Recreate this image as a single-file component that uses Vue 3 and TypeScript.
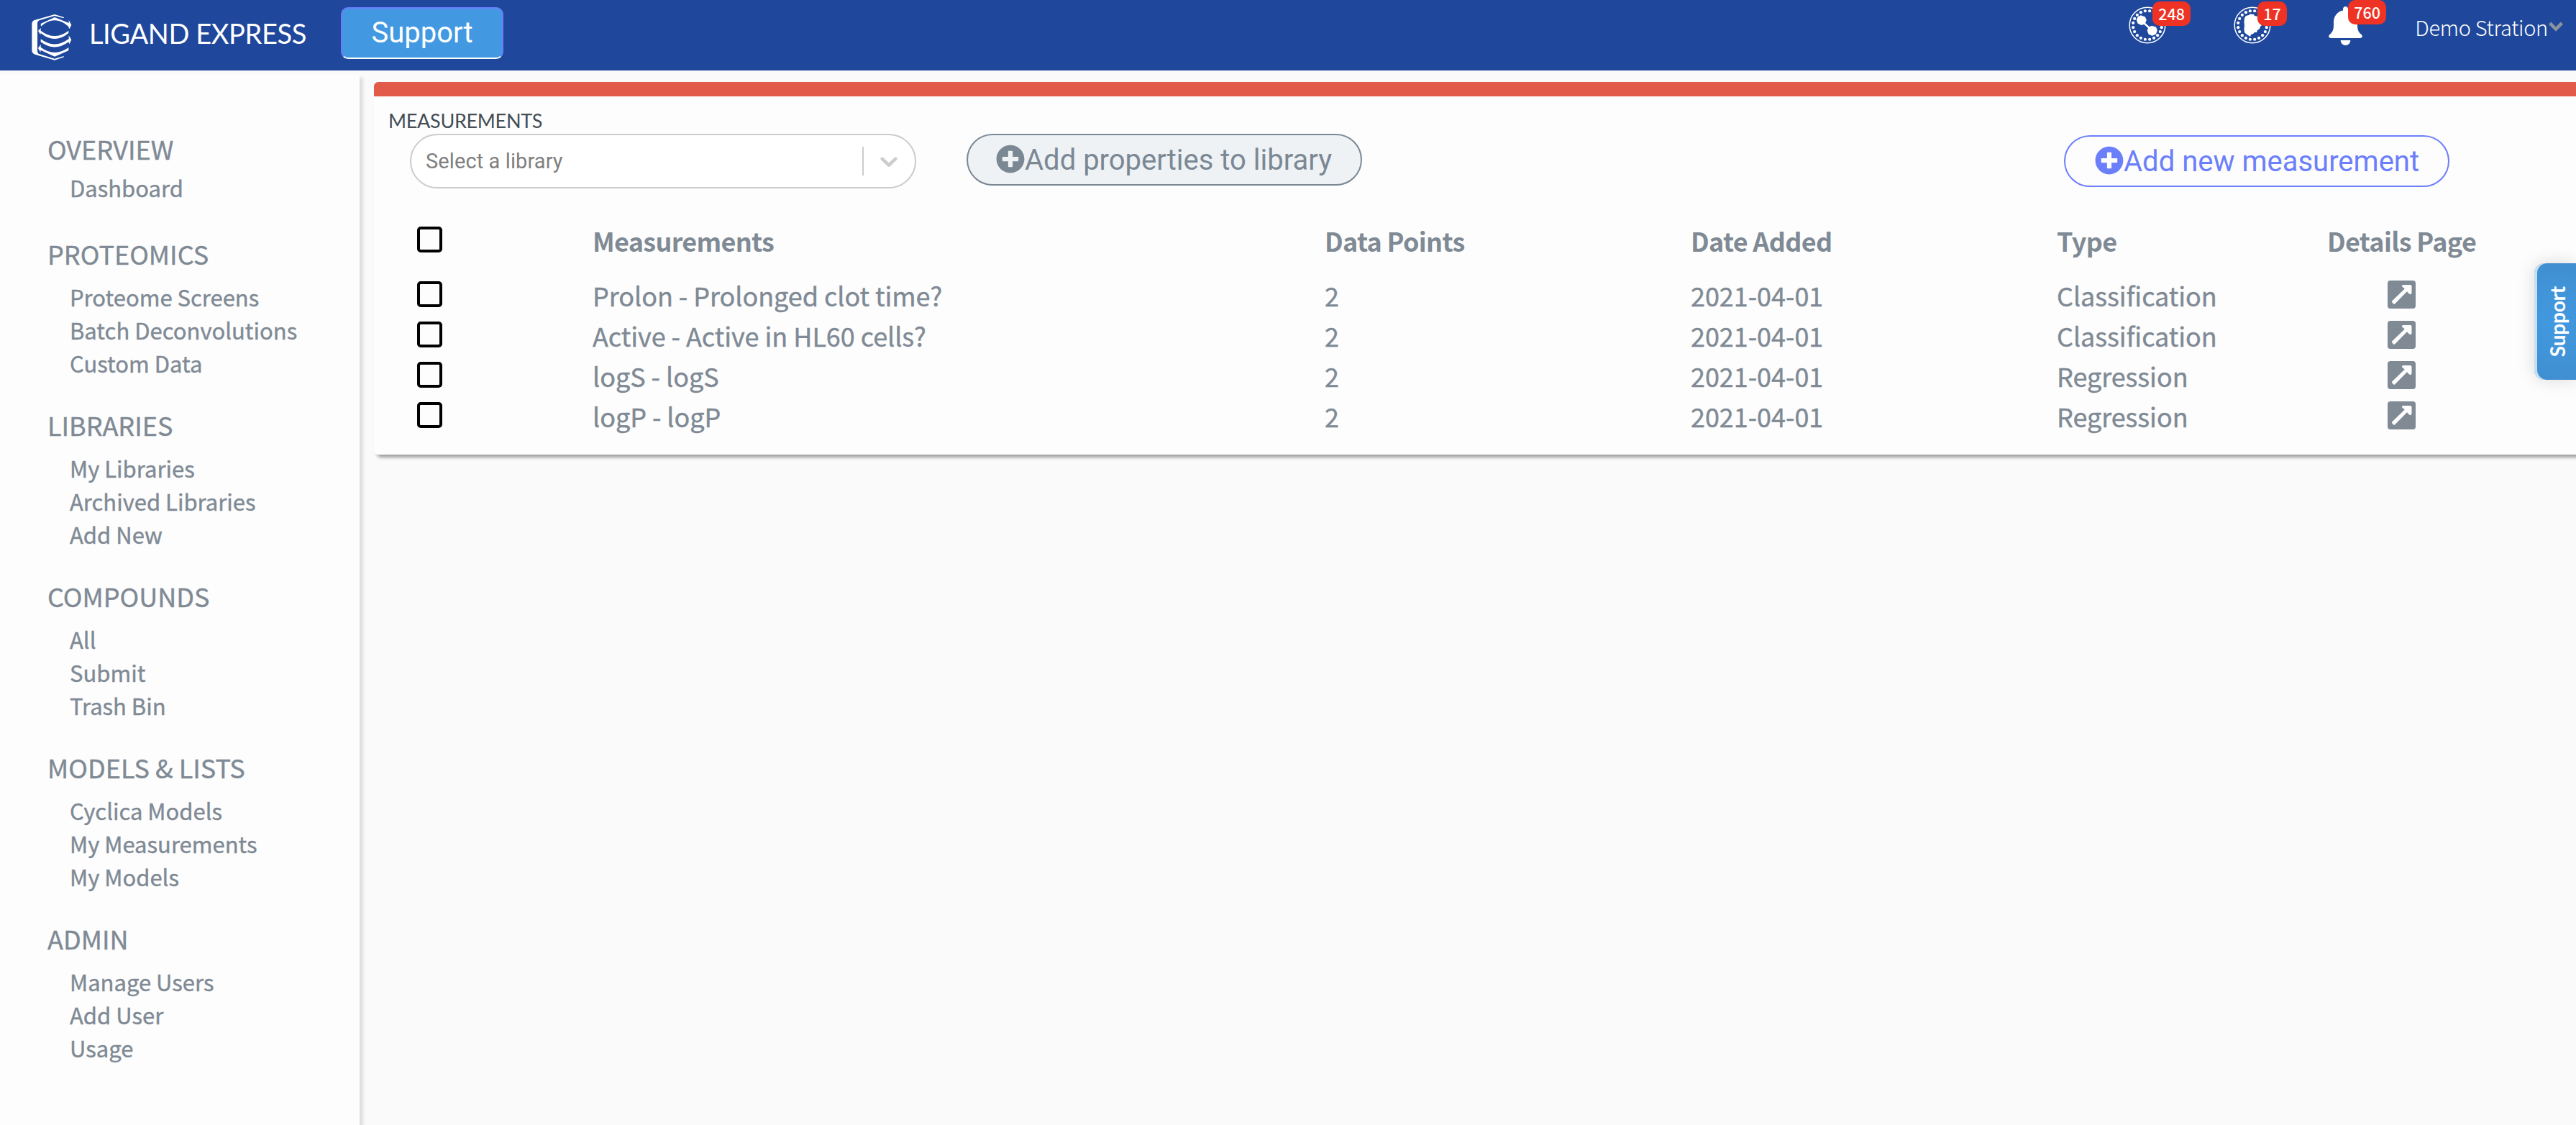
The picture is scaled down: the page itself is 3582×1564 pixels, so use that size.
<script setup lang="ts">
interface NavSection {
  title: string
  items: string[]
}

interface Measurement {
  name: string
  points: number
  added: string
  type: string
}

const sections: NavSection[] = [
  { title: 'OVERVIEW', items: ['Dashboard'] },
  { title: 'PROTEOMICS', items: ['Proteome Screens', 'Batch Deconvolutions', 'Custom Data'] },
  { title: 'LIBRARIES', items: ['My Libraries', 'Archived Libraries', 'Add New'] },
  { title: 'COMPOUNDS', items: ['All', 'Submit', 'Trash Bin'] },
  { title: 'MODELS & LISTS', items: ['Cyclica Models', 'My Measurements', 'My Models'] },
  { title: 'ADMIN', items: ['Manage Users', 'Add User', 'Usage'] },
]

const rows: Measurement[] = [
  { name: 'Prolon - Prolonged clot time?', points: 2, added: '2021-04-01', type: 'Classification' },
  { name: 'Active - Active in HL60 cells?', points: 2, added: '2021-04-01', type: 'Classification' },
  { name: 'logS - logS', points: 2, added: '2021-04-01', type: 'Regression' },
  { name: 'logP - logP', points: 2, added: '2021-04-01', type: 'Regression' },
]

// Dots evenly spaced round the rim of the two circular header icons
const dots = Array.from({ length: 20 }, (_, i) => {
  const a = ((i + 0.5) / 20) * Math.PI * 2
  return { x: 26 + 20 * Math.cos(a), y: 26 + 20 * Math.sin(a) }
})
</script>

<template>
  <div class="page">
    <header class="topbar">
      <svg class="logo" viewBox="0 0 270 270" fill="#fff">
        <path d="M138 30L177 42L175 46L138 36L74 55Q66 58 66 66V184Q66 192 73 195L138 215L175 204L177 208L138 221L56 197Q43 192 43 180V70Q43 58 54 54Z" />
        <path d="M80 69L138 42L197 66L197 54L208 74L199 91L195 80Q138 30 81 80Z" />
        <path d="M80 87L80 98Q138 142 196 98V108Q138 156 80 108L79 115L69 99Z" />
        <path d="M80 133Q138 176 197 132L197 118L208 136L199 154L196 145Q138 188 80 145Z" />
        <path d="M80 155L80 167Q138 210 196 168V181L138 206L80 179L79 188L69 171Z" />
      </svg>
      <span class="brand">LIGAND EXPRESS</span>
      <button class="support-btn">Support</button>

      <div class="tools">
        <div class="tool tool-screens">
          <svg width="52" height="52" viewBox="0 0 52 52" fill="#fff">
            <circle cx="26" cy="26" r="24.8" fill="none" stroke="#fff" stroke-width="1.5" />
            <circle v-for="(d, i) in dots" :key="i" :cx="d.x" :cy="d.y" r="2.1" />
            <path d="M18 20L32 33" stroke="#fff" stroke-width="2.4" />
            <path d="M17 12.3L23 14.5L24.8 19L22.5 24.5L17.5 26L12.5 23.5L10.8 18.5L13 14Z" />
            <path d="M32 26.8L38 28.5L39.8 33L38 38.5L32.5 40.8L27.5 38.5L25.8 33.5L27.5 28.8Z" />
          </svg>
          <span class="badge">248</span>
        </div>
        <div class="tool tool-proteins">
          <svg width="52" height="52" viewBox="0 0 52 52" fill="#fff">
            <circle cx="26" cy="26" r="24.8" fill="none" stroke="#fff" stroke-width="1.5" />
            <circle v-for="(d, i) in dots" :key="i" :cx="d.x" :cy="d.y" r="2.1" />
            <path d="M17 13L21 12L23 10.5L28 11L29 13L34 14L37 19L39 26L37 28L36 31L33 33L32 36L29 36L27 38L24 39L23 42L20 40L17 38L15 36L14.5 31L15 27L14.5 22L15 16Z" />
          </svg>
          <span class="badge">17</span>
        </div>
        <div class="tool tool-alerts">
          <svg width="47" height="54" viewBox="0 0 47 54" fill="#fff">
            <path d="M23.500 0C25.600 0 27 1.700 27 3.800V5.400C35 7 40 13.500 40 22V26C40 33 42 36 45 38.500C48 41 47 44 43.500 44H3.500C0 44 -1 41 2 38.500C5 36 7 33 7 26V22C7 13.500 12 7 20 5.400V3.800C20 1.700 21.400 0 23.500 0Z" />
            <path d="M16.700 47H30.300C30.300 51 27.300 54 23.500 54C19.700 54 16.700 51 16.700 47Z" />
          </svg>
          <span class="badge">760</span>
        </div>
        <div class="user">
          <span>Demo Stration</span>
          <svg width="20" height="14" viewBox="0 0 20 14" fill="none" stroke="#8b949c" stroke-width="4.6">
            <path d="M1.700 2.200L10 10.600L18.300 2.200" />
          </svg>
        </div>
      </div>
    </header>

    <div class="body">
      <nav class="sidebar">
        <section v-for="s in sections" :key="s.title">
          <h2>{{ s.title }}</h2>
          <ul>
            <li v-for="item in s.items" :key="item">{{ item }}</li>
          </ul>
        </section>
      </nav>

      <main class="card">
        <h1>MEASUREMENTS</h1>
        <div class="controls">
          <div class="select">
            <span class="placeholder">Select a library</span>
            <span class="separator"></span>
            <svg width="40" height="40" viewBox="0 0 20 20" fill="#ccc">
              <path d="M4.516 7.548c0.436-0.446 1.043-0.481 1.576 0l3.908 3.747 3.908-3.747c0.533-0.481 1.141-0.446 1.574 0 0.436 0.445 0.408 1.197 0 1.615-0.406 0.418-4.695 4.502-4.695 4.502-0.217 0.223-0.502 0.335-0.787 0.335s-0.570-0.112-0.789-0.335c0 0-4.287-4.084-4.695-4.502s-0.436-1.170 0-1.615z" />
            </svg>
          </div>
          <button class="pill pill-grey">
            <svg width="40" height="40" viewBox="0 0 512 512" fill="currentColor">
              <path d="M256 8C119 8 8 119 8 256s111 248 248 248 248-111 248-248S393 8 256 8zm144 276c0 6.600-5.400 12-12 12h-92v92c0 6.600-5.400 12-12 12h-56c-6.600 0-12-5.400-12-12v-92h-92c-6.600 0-12-5.400-12-12v-56c0-6.600 5.400-12 12-12h92v-92c0-6.600 5.400-12 12-12h56c6.600 0 12 5.400 12 12v92h92c6.600 0 12 5.400 12 12v56z" />
            </svg>
            <span>Add properties to library</span>
          </button>
          <button class="pill pill-blue">
            <svg width="40" height="40" viewBox="0 0 512 512" fill="currentColor">
              <path d="M256 8C119 8 8 119 8 256s111 248 248 248 248-111 248-248S393 8 256 8zm144 276c0 6.600-5.400 12-12 12h-92v92c0 6.600-5.400 12-12 12h-56c-6.600 0-12-5.400-12-12v-92h-92c-6.600 0-12-5.400-12-12v-56c0-6.600 5.400-12 12-12h92v-92c0-6.600 5.400-12 12-12h56c6.600 0 12 5.400 12 12v92h92c6.600 0 12 5.400 12 12v56z" />
            </svg>
            <span>Add new measurement</span>
          </button>
        </div>

        <div class="table">
          <div class="row head">
            <span class="check"></span>
            <span>Measurements</span>
            <span>Data Points</span>
            <span>Date Added</span>
            <span>Type</span>
            <span class="details">Details Page</span>
          </div>
          <div v-for="r in rows" :key="r.name" class="row">
            <span class="check"></span>
            <span>{{ r.name }}</span>
            <span>{{ r.points }}</span>
            <span>{{ r.added }}</span>
            <span>{{ r.type }}</span>
            <span class="details">
              <svg width="39" height="39" viewBox="0 0 39 39">
                <rect width="39" height="39" rx="4" fill="#7f8a95" />
                <path d="M21.500 6H31.500Q33.500 6 33.500 8V17.500Q32 20.500 29.500 18L27 15.300L10.300 32.300Q9 33.300 8 32.300L6.400 30.600Q5.400 29.300 6.400 28.300L23.800 11.500L20.500 8.800Q18.800 7 21.500 6Z" fill="#fdfdfd" />
              </svg>
            </span>
          </div>
        </div>
      </main>
    </div>

    <div class="support-tab"><span>Support</span></div>
  </div>
</template>

<style>
html,
body {
  margin: 0;
  overflow: hidden;
  background: #fafafa;
}
</style>

<style scoped>
.page {
  position: relative;
  width: 3582px;
  height: 1564px;
  overflow: hidden;
  display: flex;
  flex-direction: column;
  background: #fafafa;
  color: #7f8a95;
  font-family: "Noto Sans CJK SC", "Noto Sans", sans-serif;
}

.topbar {
  display: flex;
  align-items: flex-start;
  height: 98px;
  flex: none;
  background: #1f489c;
}
.logo {
  width: 90px;
  height: 90px;
  margin: 10px 0 0 30px;
}
.brand {
  width: 350px;
  margin: 22px 0 0 4px;
  color: #fff;
  font: 38px/48px Lato, sans-serif;
  letter-spacing: -0.4px;
  white-space: nowrap;
}
.support-btn {
  box-sizing: border-box;
  width: 226px;
  height: 72px;
  margin: 10px 0 0;
  padding: 0;
  border: 2px solid #6c7cff;
  border-bottom-color: #fff;
  border-radius: 10px;
  background: #4299e1;
  color: #fff;
  font: 40px/68px Roboto, sans-serif;
}

.tools {
  display: flex;
  align-items: flex-start;
  margin-left: auto;
  color: #fff;
}
.tool {
  position: relative;
}
.tool svg {
  display: block;
}
.tool-screens {
  margin: 9px 94px 0 0;
}
.tool-proteins {
  margin: 9px 80px 0 0;
}
.tool-alerts {
  margin: 9px 73px 0 0;
}
.badge {
  position: absolute;
  top: -7px;
  left: 33px;
  padding: 0 8px;
  border-radius: 10px;
  background: #ee3224;
  font-size: 21.500px;
  font-weight: 500;
  line-height: 34px;
}
.tool-alerts .badge {
  top: -9px;
  left: 27px;
}
.user {
  display: flex;
  align-items: center;
  gap: 1px;
  margin: 16px 18px 0 0;
  font-size: 29px;
  font-weight: 300;
  line-height: 42px;
  letter-spacing: -0.3px;
}

.body {
  display: flex;
  flex: 1;
  align-items: flex-start;
  gap: 20px;
}
.sidebar {
  box-sizing: border-box;
  width: 500px;
  height: 1460px;
  flex: none;
  margin-top: 6px;
  padding: 82px 0 0 66px;
  background: #fdfdfd;
  box-shadow: 5px 4px 4px #dedede;
  -webkit-text-stroke: 0.4px currentColor;
}
.sidebar section {
  margin-bottom: 42px;
}
.sidebar h2 {
  margin: 0 0 18px;
  font-size: 36px;
  font-weight: 400;
  line-height: 40px;
}
.sidebar section:first-child {
  margin-bottom: 48px;
}
.sidebar section:first-child h2 {
  margin-bottom: 12px;
}
.sidebar ul {
  margin: 0;
  padding: 0 0 0 31px;
  list-style: none;
}
.sidebar li {
  font-size: 31px;
  line-height: 46px;
}

.card {
  box-sizing: border-box;
  width: 3080px;
  height: 518px;
  flex: none;
  margin-top: 16px;
  border-top: 20px solid #e25b4a;
  border-radius: 6px;
  background: #fdfdfd;
  box-shadow: 4px 4px 4px #a0a0a0;
}
.card h1 {
  margin: 18px 0 2px 20px;
  color: #454d55;
  font: 27px/32px Lato, sans-serif;
  letter-spacing: -0.3px;
}
.controls {
  display: flex;
  align-items: flex-start;
  height: 120px;
  padding-left: 50px;
}
.select {
  box-sizing: border-box;
  display: flex;
  align-items: center;
  width: 704px;
  height: 76px;
  padding: 0 16px 0 20px;
  border: 2px solid #ccc;
  border-radius: 38px;
  background: #fff;
}
.placeholder {
  flex: 1;
  color: #808080;
  font: 29px/40px Roboto, sans-serif;
  letter-spacing: 0.1px;
}
.separator {
  width: 2px;
  height: 40px;
  margin-right: 15px;
  background: #ccc;
}
.pill {
  box-sizing: border-box;
  display: flex;
  align-items: center;
  height: 72px;
  padding: 0 0 0 39px;
  border: 2px solid currentColor;
  border-radius: 36px;
  font: 40px/68px Roboto, sans-serif;
  white-space: nowrap;
}
.pill svg {
  flex: none;
  margin-top: -3px;
}
.pill span {
  padding-top: 1px;
}
.pill-grey {
  width: 550px;
  margin-left: 70px;
  background: #eef2f5;
  color: #7b8894;
}
.pill-blue {
  width: 536px;
  margin: 2px 0 0 976px;
  padding-left: 41px;
  background: #fdfdfd;
  color: #6c7ffb;
}

.row {
  display: grid;
  grid-template-columns: 244px 1018px 509px 509px 376px 207px;
  align-items: center;
  padding-left: 60px;
  font-size: 36px;
  line-height: 56px;
  letter-spacing: -0.06px;
  white-space: nowrap;
  -webkit-text-stroke: 0.4px currentColor;
}
.head {
  margin-bottom: 20px;
  font-weight: 700;
  letter-spacing: -0.7px;
  -webkit-text-stroke: 0;
}
.check {
  box-sizing: border-box;
  width: 35px;
  height: 36px;
  margin-top: -2px;
  border: 4px solid #000;
  border-radius: 5px;
}
.head .check {
  margin-top: -3px;
}
.details {
  display: flex;
  align-items: center;
  justify-content: center;
  height: 56px;
}
.details svg {
  margin-top: -2px;
}

.support-tab {
  position: absolute;
  box-sizing: border-box;
  top: 366px;
  right: 0;
  display: flex;
  align-items: center;
  justify-content: center;
  width: 58px;
  height: 162px;
  padding-left: 6px;
  border-radius: 14px 0 0 14px;
  background: radial-gradient(circle at center, #4299e1, #3f8fd0);
  box-shadow: inset 4px 0 0 rgba(255, 255, 255, 0.7), 0 0 24px rgba(0, 0, 0, 0.14);
  color: #fff;
  font: 700 28px/52px Lato, sans-serif;
  letter-spacing: -0.2px;
}
.support-tab span {
  writing-mode: vertical-rl;
  transform: rotate(180deg);
}
</style>
